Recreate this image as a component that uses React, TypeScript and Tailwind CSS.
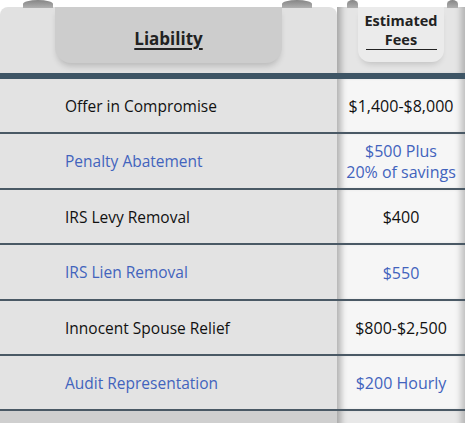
const rows = [
  { name: "Offer in Compromise", fee: ["$1,400-$8,000"], blue: false, h: "h-[53px]" },
  { name: "Penalty Abatement", fee: ["$500 Plus", "20% of savings"], blue: true, h: "h-[54px]" },
  { name: "IRS Levy Removal", fee: ["$400"], blue: false, h: "h-[53px]" },
  { name: "IRS Lien Removal", fee: ["$550"], blue: true, h: "h-[54px]" },
  { name: "Innocent Spouse Relief", fee: ["$800-$2,500"], blue: false, h: "h-[53px]" },
  { name: "Audit Representation", fee: ["$200 Hourly"], blue: true, h: "h-[53px]" },
];

const colShadow =
  "shadow-[inset_9px_0_6px_-5px_rgba(0,0,0,0.28),inset_-9px_0_6px_-5px_rgba(0,0,0,0.22)]";

function Curl({ className }: { className: string }) {
  return (
    <div
      className={`absolute top-0 h-[8px] rounded-t-[50%] bg-gradient-to-b from-[#858585] to-[#b0b0b0] ${className}`}
    />
  );
}

export default function App() {
  return (
    <div className="w-[465px] h-[423px] overflow-hidden bg-white font-['Open_Sans',sans-serif]">
      {/* Header */}
      <div className="flex h-[73px]">
        <div className="relative w-[337px] pt-[7px]">
          <Curl className="left-[23px] w-[30px]" />
          <Curl className="left-[282px] w-[30px]" />
          <div className="h-full rounded-t-[8px] bg-[#e1e1e1] pl-[55px]">
            <div className="flex h-[56px] w-[227px] items-center justify-center rounded-b-[16px] bg-[#cdcdcd] pt-[8px] shadow-[0_5px_6px_-2px_rgba(0,0,0,0.18)]">
              <span className="text-[17px] font-bold text-[#222] underline underline-offset-[3px] decoration-[1.5px]">
                Liability
              </span>
            </div>
          </div>
        </div>
        <div className="relative flex-1 pt-[7px]">
          <Curl className="left-[10px] w-[11px]" />
          <Curl className="left-[110px] w-[11px]" />
          <div className={`h-full bg-[#e5e5e5] px-[21px] ${colShadow}`}>
            <div className="flex h-[55px] flex-col items-center justify-start rounded-b-[12px] bg-[#ebebeb] pt-[4px] shadow-[0_5px_6px_-3px_rgba(0,0,0,0.16)]">
              <span className="text-[14.5px] font-bold leading-[19px] text-[#222]">Estimated</span>
              <span className="w-[71px] border-b-[1.5px] border-[#222] text-center text-[14.5px] font-bold leading-[19px] text-[#222]">
                Fees
              </span>
            </div>
          </div>
        </div>
      </div>

      {/* Band */}
      <div className="h-[6px] bg-[#3e5565]" />

      {/* Rows */}
      {rows.map((r, i) => (
        <div key={i}>
          {i > 0 && <div className="h-[2px] bg-[#4a5965]" />}
          <div className={`flex ${r.h}`}>
            <div
              className={`flex w-[337px] items-center bg-[#e3e3e3] pl-[65px] pt-[2px] text-[15.5px] ${
                r.blue ? "text-[#4263bd]" : "text-[#111]"
              }`}
            >
              {r.name}
            </div>
            <div
              className={`flex flex-1 flex-col items-center justify-center bg-[#f6f6f6] pt-[2px] text-center text-[16px] leading-[21px] ${colShadow} ${
                r.blue ? "text-[#4263bd]" : "text-[#111]"
              }`}
            >
              {r.fee.map((f) => (
                <span key={f}>{f}</span>
              ))}
            </div>
          </div>
        </div>
      ))}
      <div className="h-[2px] bg-[#4a5965]" />

      {/* Bottom */}
      <div className="flex h-[14px]">
        <div className="w-[337px] bg-[#cfcfcf]" />
        <div className={`flex-1 bg-[#e8e8e8] ${colShadow}`} />
      </div>
    </div>
  );
}
